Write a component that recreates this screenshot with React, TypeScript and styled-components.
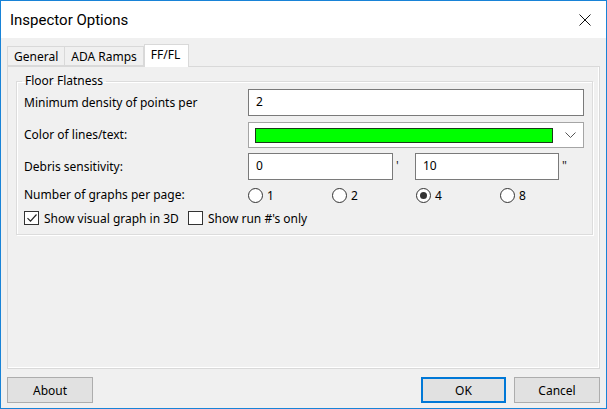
import React from "react";
import styled, { createGlobalStyle } from "styled-components";

const GlobalStyle = createGlobalStyle`
    html,
    body {
        margin: 0;
        padding: 0;
        background: #f0f0f0;
    }

    body {
        font-family: "Noto Sans", "Open Sans", "Liberation Sans", sans-serif;
        color: #000;
    }
`;

const Window = styled.div`
    width: 607px;
    height: 409px;
    box-sizing: border-box;
    border: 1px solid #1883d7;
    background: #f0f0f0;
    display: flex;
    flex-direction: column;
`;

const TitleBar = styled.div`
    height: 37px;
    flex: none;
    background: #fff;
    display: flex;
    align-items: center;
    justify-content: space-between;
    padding: 0 15px 0 9px;
`;

const Title = styled.span`
    font-family: Roboto, "Noto Sans", sans-serif;
    font-size: 15px;
`;

const CloseButton = styled.button`
    border: 0;
    background: transparent;
    padding: 0;
    width: 12px;
    height: 12px;
    display: flex;
`;

const Body = styled.div`
    flex: 1;
    display: flex;
    flex-direction: column;
    padding: 5px 6px 5px 6px;
`;

const TabStrip = styled.div`
    display: flex;
    align-items: flex-end;
    height: 23px;
    position: relative;
    z-index: 1;
`;

const Tab = styled.div<{ $active?: boolean; $first?: boolean }>`
    box-sizing: border-box;
    height: ${(p) => (p.$active ? "23px" : "20px")};
    margin-bottom: ${(p) => (p.$active ? "-1px" : "0")};
    padding: 0 ${(p) => (p.$active ? "8px" : "6px")} 0 6px;
    display: flex;
    align-items: center;
    padding-bottom: ${(p) => (p.$active ? "3px" : "0")};
    font-size: 12px;
    background: ${(p) => (p.$active ? "#fff" : "#f0f0f0")};
    border: 1px solid #d9d9d9;
    border-bottom: ${(p) => (p.$active ? "0" : "1px solid #d9d9d9")};
    border-left: ${(p) => (p.$first || p.$active ? "1px solid #d9d9d9" : "0")};
`;

const Panel = styled.div`
    flex: 1;
    border: 1px solid #d9d9d9;
    box-shadow: inset -1px -1px 0 #fff;
    padding: 6px 9px 0 8px;
`;

const Group = styled.fieldset`
    margin: 0;
    padding: 0 8px 7px 7px;
    border: 1px solid #dcdcdc;
    box-shadow: 1px 1px 0 #fff, inset 1px 1px 0 #fff;
    display: grid;
    grid-template-columns: 224px 1fr;
    row-gap: 6px;
    align-items: center;
`;

const Legend = styled.legend`
    font-size: 12px;
    line-height: 16px;
    padding: 0 3px;
    margin-left: -2px;
`;

const Label = styled.span`
    font-size: 12px;
`;

const TextBox = styled.div<{ $width?: number }>`
    box-sizing: border-box;
    height: 27px;
    width: ${(p) => (p.$width ? `${p.$width}px` : "100%")};
    background: #fff;
    border: 1px solid #7a7a7a;
    padding: 0 7px 2px;
    display: flex;
    align-items: center;
    font-size: 12px;
`;

const Combo = styled.div`
    box-sizing: border-box;
    height: 26px;
    margin-bottom: -1px;
    background: #fff;
    border: 1px solid #a5a5a5;
    display: flex;
    align-items: center;
    padding: 0 7px 0 6px;
    gap: 12px;
`;

const Swatch = styled.div<{ $color: string }>`
    flex: 1;
    height: 15px;
    box-sizing: border-box;
    background: ${(p) => p.$color};
    border: 1px solid #1a3a1a;
`;

const InlineRow = styled.div`
    display: flex;
    align-items: center;
`;

const Unit = styled.span`
    width: 22px;
    padding-left: 3px;
    box-sizing: border-box;
    font-size: 12px;
    color: #222;
    align-self: flex-start;
    padding-top: 4px;
`;

const RadioRow = styled.div`
    display: grid;
    grid-template-columns: repeat(4, 84px);
    height: 16px;
`;

const Option = styled.label<{ $gap?: number }>`
    display: flex;
    align-items: center;
    gap: ${(p) => p.$gap ?? 4}px;
    font-size: 12px;
`;

const RadioCircle = styled.span<{ $checked?: boolean }>`
    box-sizing: border-box;
    width: 15px;
    height: 15px;
    border-radius: 50%;
    border: 1px solid #333;
    background: #fff;
    display: flex;
    align-items: center;
    justify-content: center;

    &::after {
        content: "";
        width: 7px;
        height: 7px;
        border-radius: 50%;
        background: #333;
        display: ${(p) => (p.$checked ? "block" : "none")};
    }
`;

const CheckRow = styled.div`
    grid-column: 1 / -1;
    display: flex;
    align-items: center;
    gap: 9px;
    height: 18px;
`;

const CheckBox = styled.span`
    box-sizing: border-box;
    width: 15px;
    height: 14px;
    border: 1px solid #333;
    background: #fff;
    display: flex;
    align-items: center;
    justify-content: center;
`;

const ButtonBar = styled.div`
    display: flex;
    align-items: center;
    gap: 8px;
    margin-top: 8px;
`;

const Spacer = styled.div`
    flex: 1;
`;

const Button = styled.button<{ $default?: boolean; $width: number }>`
    box-sizing: border-box;
    width: ${(p) => p.$width}px;
    height: 26px;
    background: #e1e1e1;
    border: 1px solid ${(p) => (p.$default ? "#0078d7" : "#adadad")};
    box-shadow: ${(p) => (p.$default ? "inset 0 0 0 1px #0078d7" : "none")};
    font-family: inherit;
    font-size: 12px;
    color: #000;
    padding: 0;
`;

function Check() {
    return (
        <svg width="12" height="12" viewBox="0 0 12 12">
            <path d="M1.5 6.2 L4.5 9.2 L10.5 2.5" fill="none" stroke="#222" strokeWidth="1.2" />
        </svg>
    );
}

const graphCounts = [1, 2, 4, 8];

export default function App() {
    return (
        <>
            <GlobalStyle />
            <Window>
                <TitleBar>
                    <Title>Inspector Options</Title>
                    <CloseButton aria-label="Close">
                        <svg width="12" height="12" viewBox="0 0 12 12">
                            <path d="M0.5 0.5 L11.5 11.5 M11.5 0.5 L0.5 11.5" stroke="#111" strokeWidth="1" />
                        </svg>
                    </CloseButton>
                </TitleBar>
                <Body>
                    <TabStrip>
                        <Tab $first>General</Tab>
                        <Tab>ADA Ramps</Tab>
                        <Tab $active>FF/FL</Tab>
                    </TabStrip>
                    <Panel>
                        <Group>
                            <Legend>Floor Flatness</Legend>
                            <Label>Minimum density of points per</Label>
                            <TextBox>2</TextBox>

                            <Label>Color of lines/text:</Label>
                            <Combo>
                                <Swatch $color="#00ff00" />
                                <svg width="11" height="7" viewBox="0 0 11 7">
                                    <path d="M0.5 0.5 L5.5 5.5 L10.5 0.5" fill="none" stroke="#555" strokeWidth="1" />
                                </svg>
                            </Combo>

                            <Label>Debris sensitivity:</Label>
                            <InlineRow>
                                <TextBox $width={145}>0</TextBox>
                                <Unit>'</Unit>
                                <TextBox $width={144}>10</TextBox>
                                <Unit>"</Unit>
                            </InlineRow>

                            <Label>Number of graphs per page:</Label>
                            <RadioRow>
                                {graphCounts.map((n) => (
                                    <Option key={n}>
                                        <RadioCircle $checked={n === 4} />
                                        {n}
                                    </Option>
                                ))}
                            </RadioRow>

                            <CheckRow>
                                <Option $gap={5}>
                                    <CheckBox>
                                        <Check />
                                    </CheckBox>
                                    Show visual graph in 3D
                                </Option>
                                <Option $gap={5}>
                                    <CheckBox />
                                    Show run #'s only
                                </Option>
                            </CheckRow>
                        </Group>
                    </Panel>
                    <ButtonBar>
                        <Button $width={86}>About</Button>
                        <Spacer />
                        <Button $width={85} $default>
                            OK
                        </Button>
                        <Button $width={86}>Cancel</Button>
                    </ButtonBar>
                </Body>
            </Window>
        </>
    );
}
